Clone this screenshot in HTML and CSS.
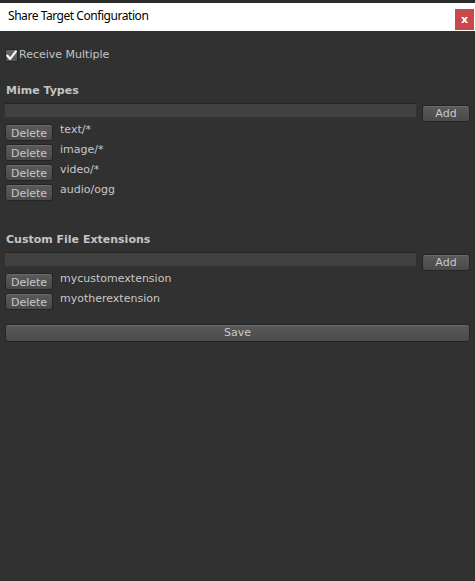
FILE: index.html
```html
<!DOCTYPE html>
<html>
<head>
<meta charset="utf-8">
<link rel="stylesheet" href="styles.css">
</head>
<body>
<div class="topstrip"></div>
<div class="titlebar">
  <span class="title">Share Target Configuration</span>
  <span class="close">x</span>
</div>
<div class="content">
  <label class="check-row">
    <span class="checkbox"><svg width="13" height="13" viewBox="0 0 13 13"><path d="M2.3 6.6 L5.1 9.9 L10.9 2.4" fill="none" stroke="#f4f4f4" stroke-width="2.3" stroke-linecap="round" stroke-linejoin="round"/></svg></span>
    <span class="check-label">Receive Multiple</span>
  </label>

  <div class="section first">
    <div class="heading">Mime Types</div>
    <div class="add-row">
      <div class="field"></div>
      <button class="btn add">Add</button>
    </div>
    <div class="list">
      <div class="item"><button class="btn del">Delete</button><span class="val">text/*</span></div>
      <div class="item"><button class="btn del">Delete</button><span class="val">image/*</span></div>
      <div class="item"><button class="btn del">Delete</button><span class="val">video/*</span></div>
      <div class="item"><button class="btn del">Delete</button><span class="val">audio/ogg</span></div>
    </div>
  </div>

  <div class="section second">
    <div class="heading">Custom File Extensions</div>
    <div class="add-row">
      <div class="field"></div>
      <button class="btn add">Add</button>
    </div>
    <div class="list">
      <div class="item"><button class="btn del">Delete</button><span class="val">mycustomextension</span></div>
      <div class="item"><button class="btn del">Delete</button><span class="val">myotherextension</span></div>
    </div>
  </div>

  <button class="btn save">Save</button>
</div>
</body>
</html>
```

FILE: styles.css
```css
html, body {
  margin: 0;
  padding: 0;
  height: 100%;
  background: #313131;
}
body {
  font-family: "DejaVu Sans", Verdana, sans-serif;
  font-size: 11px;
  color: #c6c6c6;
}
.topstrip {
  height: 3px;
  background: #2b2b2b;
}
.titlebar {
  height: 28px;
  background: #ffffff;
  display: flex;
  justify-content: space-between;
  align-items: flex-start;
}
.title {
  font-family: "Noto Sans", "Open Sans", sans-serif;
  font-size: 12px;
  letter-spacing: -0.45px;
  color: #000;
  margin-left: 8px;
  margin-top: 5px;
  line-height: 16px;
}
.close {
  width: 19px;
  height: 21px;
  margin-top: 6px;
  margin-right: 1px;
  background: #c8484b;
  color: #fff;
  font-family: "DejaVu Sans", sans-serif;
  font-weight: bold;
  font-size: 11px;
  display: flex;
  align-items: center;
  justify-content: center;
}
.content {
  padding: 0 5px;
}
.check-row {
  display: flex;
  align-items: center;
  margin-top: 17px;
  height: 14px;
}
.checkbox {
  width: 13px;
  height: 13px;
  box-sizing: border-box;
  background: linear-gradient(#656565, #555555);
  border: 1px solid #262626;
  border-radius: 2px;
  display: flex;
  align-items: center;
  justify-content: center;
  overflow: hidden;
}
.checkbox svg { display: block; flex: none; }
.check-label {
  margin-left: 1px;
  line-height: 14px;
  color: #c4c4c4;
}
.section.first { margin-top: 22px; }
.section.second { margin-top: 32px; }
.heading {
  font-weight: bold;
  color: #c4c4c4;
  margin-left: 1px;
  line-height: 13px;
  height: 13px;
}
.add-row {
  display: flex;
  align-items: flex-start;
  margin-top: 6px;
  gap: 6px;
}
.field {
  flex: 1;
  height: 14px;
  box-sizing: border-box;
  background: #414141;
  border-top: 1px solid #242424;
}
.btn {
  font-family: "DejaVu Sans", Verdana, sans-serif;
  font-size: 11px;
  color: #c8c8c8;
  background: linear-gradient(#5a5a5a, #4a4a4a);
  border: 1px solid #242424;
  border-radius: 3px;
  padding: 0;
  margin: 0;
  box-sizing: border-box;
  box-shadow: inset 0 1px 0 #6a6a6a;
  line-height: 14px;
}
.add {
  width: 48px;
  height: 17px;
  margin-top: 2px;
}
.list {
  margin-top: 2px;
  display: flex;
  flex-direction: column;
  gap: 3px;
}
.item {
  display: flex;
  align-items: flex-start;
  height: 17px;
}
.del {
  width: 48px;
  height: 17px;
  padding-top: 2px;
  line-height: 13px;
}
.val {
  margin-left: 7px;
  line-height: 13px;
  margin-top: -1px;
  color: #c8c8c8;
}
.save {
  display: block;
  width: 100%;
  height: 18px;
  margin-top: 14px;
}
```
